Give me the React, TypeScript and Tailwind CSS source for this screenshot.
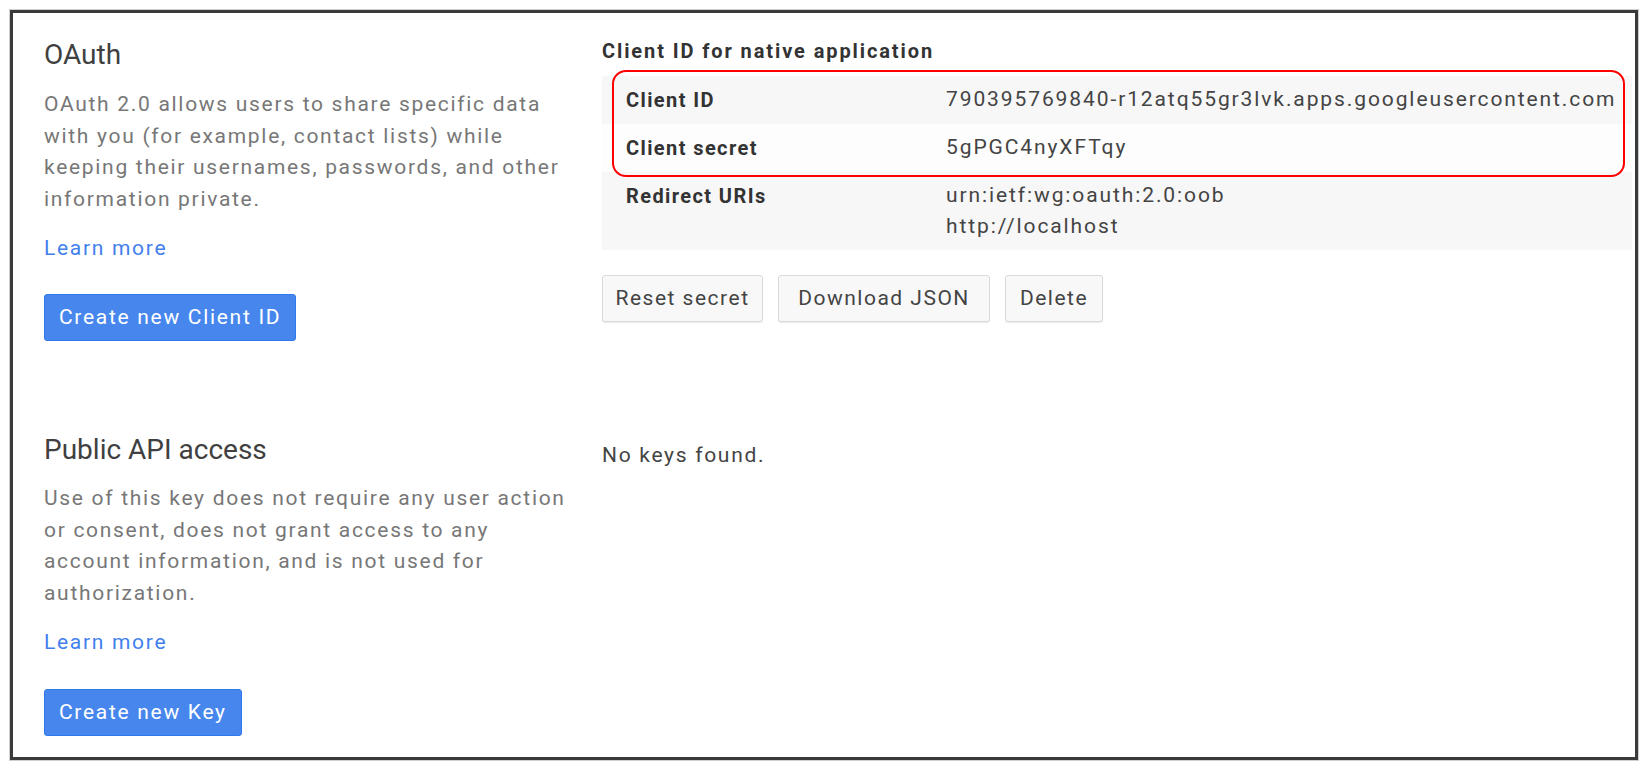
import type { ReactNode } from "react";

function BlueButton({ children }: { children: ReactNode }) {
  return (
    <button className="h-[47px] px-[14px] rounded-[3px] border border-[#3079ed] bg-[#4787ed] text-white text-[21px] tracking-[1.7px] leading-none">
      {children}
    </button>
  );
}

function GrayButton({ children, w }: { children: ReactNode; w: string }) {
  return (
    <button
      className={`${w} h-[47px] rounded-[3px] border border-[#d9d9d9] bg-[#f8f8f8] text-[#444] text-[21px] tracking-[1.5px] leading-none text-center shadow-[0_1px_1px_rgba(0,0,0,0.08)]`}
    >
      {children}
    </button>
  );
}

function Row({
  label,
  values,
  shaded,
}: {
  label: string;
  values: string[];
  shaded?: boolean;
}) {
  return (
    <div className={`flex py-2 ${shaded ? "bg-[#f7f7f7]" : "bg-[#fdfdfd]"}`}>
      <div className="w-[344px] pl-[24px] font-bold text-[#333] text-[20px] tracking-[1.4px] leading-[32px]">
        {label}
      </div>
      <div className="text-[#444] text-[21px] tracking-[1.9px] leading-[31px]">
        {values.map((v) => (
          <div key={v}>{v}</div>
        ))}
      </div>
    </div>
  );
}

export default function App() {
  return (
    <div
      className="min-h-screen bg-white pt-[10px] pl-[10px]"
      style={{ fontFamily: "Roboto, 'Noto Sans', sans-serif" }}
    >
      <div className="w-[1628px] h-[750px] border-[3px] border-[#3a3a3a] pl-[31px] pr-[3px] pt-[26px] shadow-[0_0_0_1px_#d0d0d0]">
        {/* OAuth */}
        <section className="grid grid-cols-[558px_1fr] items-start">
          <div>
            <h2 className="text-[28px] leading-[32px] text-[#404040]">OAuth</h2>
            <p className="mt-[18px] text-[21px] tracking-[1.7px] leading-[31.7px] text-[#777] whitespace-nowrap">
              OAuth 2.0 allows users to share specific data
              <br />
              with you (for example, contact lists) while
              <br />
              keeping their usernames, passwords, and other
              <br />
              information private.
            </p>
            <a className="block mt-[16px] text-[21px] tracking-[1.7px] leading-[32px] text-[#427fed]">
              Learn more
            </a>
            <div className="mt-[30px]">
              <BlueButton>Create new Client ID</BlueButton>
            </div>
          </div>

          <div className="pt-[2px]">
            <h3 className="text-[20px] leading-[20px] font-bold tracking-[1.9px] text-[#333]">
              Client ID for native application
            </h3>
            <div className="relative mt-[15px]">
              <Row
                label="Client ID"
                values={[
                  "790395769840-r12atq55gr3lvk.apps.googleusercontent.com",
                ]}
                shaded
              />
              <Row label="Client secret" values={["5gPGC4nyXFTqy"]} />
              <Row
                label="Redirect URIs"
                values={["urn:ietf:wg:oauth:2.0:oob", "http://localhost"]}
                shaded
              />
              <div className="absolute top-[-6px] left-[10px] right-[7px] h-[107px] rounded-[14px] border-2 border-[#ff0000]" />
            </div>
            <div className="mt-[25px] flex gap-[15px]">
              <GrayButton w="w-[161px]">Reset secret</GrayButton>
              <GrayButton w="w-[212px]">Download JSON</GrayButton>
              <GrayButton w="w-[98px]">Delete</GrayButton>
            </div>
          </div>
        </section>

        {/* Public API access */}
        <section className="mt-[93px] grid grid-cols-[558px_1fr] items-start">
          <div>
            <h2 className="text-[28px] leading-[32px] text-[#404040]">
              Public API access
            </h2>
            <p className="mt-[17px] text-[21px] tracking-[1.7px] leading-[31.7px] text-[#777] whitespace-nowrap">
              Use of this key does not require any user action
              <br />
              or consent, does not grant access to any
              <br />
              account information, and is not used for
              <br />
              authorization.
            </p>
            <a className="block mt-[16px] text-[21px] tracking-[1.7px] leading-[32px] text-[#427fed]">
              Learn more
            </a>
            <div className="mt-[31px]">
              <BlueButton>Create new Key</BlueButton>
            </div>
          </div>
          <div className="pt-[5px] text-[21px] tracking-[1.7px] leading-[32px] text-[#444]">
            No keys found.
          </div>
        </section>
      </div>
    </div>
  );
}
